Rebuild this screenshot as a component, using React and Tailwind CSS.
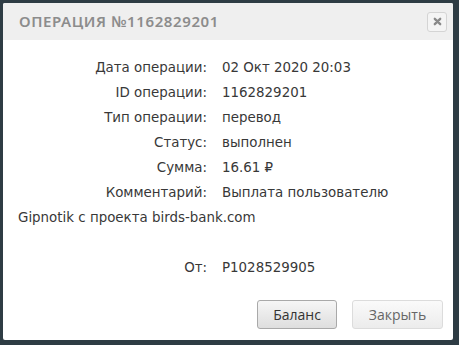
export default function App() {
  const rows = [
    ['Дата операции:', '02 Окт 2020 20:03'],
    ['ID операции:', '1162829201'],
    ['Тип операции:', 'перевод'],
    ['Статус:', 'выполнен'],
    ['Сумма:', '16.61 ₽'],
  ];

  return (
    <div className="w-[459px] h-[345px] bg-[#2e3c44] pt-[3px] pl-[3px] overflow-hidden">
      <div className="w-[450px] h-[337px] bg-white flex flex-col rounded-[2px] overflow-hidden">
        <div className="h-[37px] bg-[#efefef] flex items-center justify-between pl-[16px] pr-[6px]">
          <span
            className="text-[15px] font-semibold tracking-[0.6px] text-[#8c8c8c]"
            style={{ fontFamily: '"Noto Sans", sans-serif' }}
          >
            ОПЕРАЦИЯ №1162829201
          </span>
          <button className="w-[20px] h-[20px] rounded-[3px] border border-[#d4d4d4] bg-[#f4f4f4] flex items-center justify-center">
            <svg width="9" height="9" viewBox="0 0 10 10">
              <path d="M2 2 L8 8 M8 2 L2 8" stroke="#8a8a8a" strokeWidth="2.6" strokeLinecap="round" />
            </svg>
          </button>
        </div>

        <div
          className="flex-1 flex flex-col px-[15px] pt-[15px] text-[13.4px] leading-[25px] text-[#383838]"
          style={{ fontFamily: '"DejaVu Sans", sans-serif' }}
        >
          {rows.map(([label, value]) => (
            <div key={label}>
              <span className="inline-block w-[189px] text-right">{label}</span>
              <span className="ml-[15px]">{value}</span>
            </div>
          ))}
          <div>
            <span className="inline-block w-[189px] text-right">Комментарий:</span>
            <span className="ml-[15px]">Выплата пользователю</span>
            <br />
            Gipnotik с проекта birds-bank.com
          </div>
          <div>&nbsp;</div>
          <div>
            <span className="inline-block w-[189px] text-right">От:</span>
            <span className="ml-[15px]">P1028529905</span>
          </div>

          <div
            className="flex justify-end gap-[15px] mt-[20px] -mr-[5px]"
            style={{ fontFamily: '"Open Sans", sans-serif' }}
          >
            <button className="w-[80px] h-[29px] rounded-[3px] border border-[#a9a9a9] bg-gradient-to-b from-[#f6f6f6] to-[#dedede] text-[14px] text-[#333]">
              Баланс
            </button>
            <button className="w-[91px] h-[29px] rounded-[3px] border border-[#dcdcdc] bg-gradient-to-b from-[#fafafa] to-[#ececec] text-[14px] text-[#666]">
              Закрыть
            </button>
          </div>
        </div>
      </div>
    </div>
  );
}
